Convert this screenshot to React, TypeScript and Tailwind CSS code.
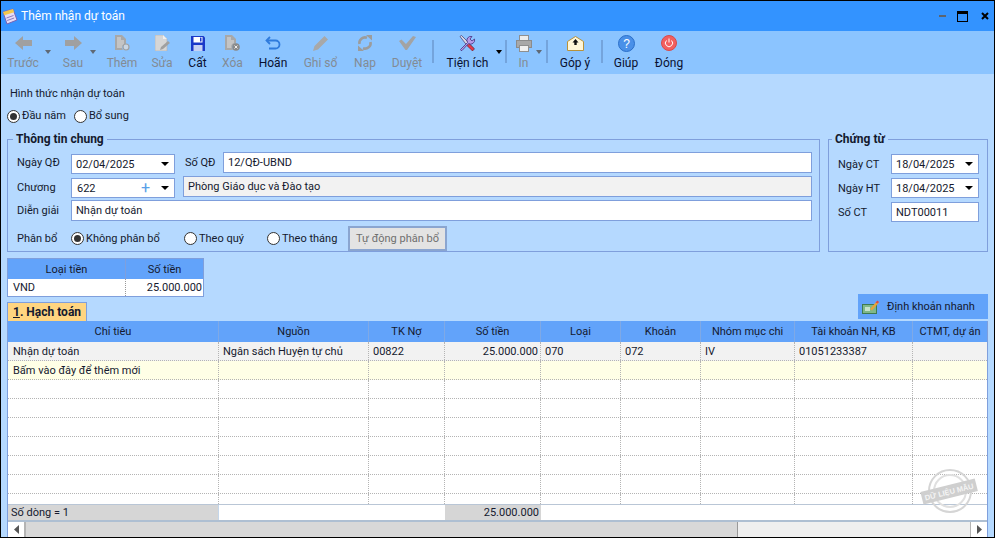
import React from "react";

function Caret({ c = "#000", small }: { c?: string; small?: boolean }) {
  return small ? (
    <svg width="6" height="4" viewBox="0 0 6 4" className="shrink-0">
      <path d="M0 0h6L3 4z" fill={c} />
    </svg>
  ) : (
    <svg width="8" height="4" viewBox="0 0 8 4" className="shrink-0">
      <path d="M0 0h8L4 4z" fill={c} />
    </svg>
  );
}

const G = "#a0a0a0";

const icons: Record<string, React.ReactNode> = {
  back: (
    <svg width="17" height="14" viewBox="0 0 17 14"><path d="M8 0 0 7l8 7v-4h9V4H8z" fill={G} /></svg>
  ),
  next: (
    <svg width="17" height="14" viewBox="0 0 17 14"><path d="M9 0l8 7-8 7v-4H0V4h9z" fill={G} /></svg>
  ),
  add: (
    <svg width="15" height="16" viewBox="0 0 15 16"><path d="M0 0h7l4 4v5a3.500 3.500 0 0 0-3 6H0z" fill="#a8a8a8" /><path d="M2 2h4v3h3v4a4 4 0 0 0-2 4H2z" fill="#c4c4c4" /><circle cx="11" cy="12" r="3" fill="#c9d6e4" stroke="#a0a0a0" strokeWidth="1.200" /></svg>
  ),
  edit: (
    <svg width="15" height="16" viewBox="0 0 15 16"><path d="M0 0h8l4 4v12H0z" fill="#d6d6d6" stroke="#b0b0b0" strokeWidth=".6" /><path d="M8 0v4h4z" fill="#f0f0f0" /><path d="M5 15l1-3 7-6 2 2-7 6z" fill="#a0a0a0" /></svg>
  ),
  save: (
    <svg width="14" height="15" viewBox="0 0 14 15"><path d="M0 0h12.500L14 1.500V15H0z" fill="#1a39c8" /><rect x="2.500" y="1" width="9" height="5.500" fill="#fff" /><rect x="2.500" y="9" width="9" height="6" fill="#c7d2f2" /><rect x="9" y="1.500" width="1.500" height="4" fill="#1a39c8" /></svg>
  ),
  del: (
    <svg width="15" height="16" viewBox="0 0 15 16"><path d="M0 0h7l4 4v4.500a4 4 0 0 0-3 6.500H0z" fill="#a8a8a8" /><path d="M2 2h4v3h3v3a4 4 0 0 0-2.500 5H2z" fill="#c4c4c4" /><circle cx="11" cy="12" r="3.800" fill="#8a8a8a" /><path d="M9.500 10.500l3 3m0-3l-3 3" stroke="#eee" /></svg>
  ),
  undo: (
    <svg width="16" height="15" viewBox="0 0 16 15" fill="none"><path d="M5 1 1.500 4.500 5 8" stroke="#2f7bdc" strokeWidth="1.800" /><path d="M2 4.500h8.500a3.800 3.800 0 0 1 0 8H4" stroke="#2f7bdc" strokeWidth="1.800" /></svg>
  ),
  pen: (
    <svg width="16" height="16" viewBox="0 0 16 16"><path d="M0 16l1.500-5L11.500 1l3.500 3.500L5 14.500z" fill="#a8a8a8" /></svg>
  ),
  reload: (
    <svg width="16" height="16" viewBox="0 0 16 16" fill="none"><path d="M2.500 9A5.500 5.500 0 0 1 10 2.800M13.500 7A5.500 5.500 0 0 1 6 13.200" stroke="#9c9c9c" strokeWidth="2.600" /><path d="M9 0h6v5.500zM7 16H1v-5.500z" fill="#9c9c9c" /></svg>
  ),
  check: (
    <svg width="17" height="14" viewBox="0 0 17 14"><path d="M0 5l2.500-1.500L7 8l7-8 3 1-9 13H6.500z" fill="#a3a3a3" /></svg>
  ),
  tools: (
    <svg width="17" height="17" viewBox="0 0 17 17">
      <path d="M1 1.500 2.500.5l8 8 5 5.500-1.500 1.500-6-5z" fill="#d9d9e6" stroke="#3d3470" strokeWidth=".7" />
      <path d="M10 9l5 4.500-1.500 2.500-5-5z" fill="#e8384a" stroke="#7a1f2a" strokeWidth=".6" />
      <path d="M1.500 14.500 8.500 7.500A4 4 0 0 1 13 1.500l-2 2.500 2 2 2.500-2a4 4 0 0 1-6 4.500L3 15.500a1.200 1.200 0 0 1-1.500-1z" fill="#b59be8" stroke="#46307f" strokeWidth=".8" />
    </svg>
  ),
  print: (
    <svg width="16" height="17" viewBox="0 0 16 17"><rect x="3.500" y=".5" width="9" height="5" fill="#ececec" stroke="#8f8f8f" /><rect x=".5" y="5.500" width="15" height="7" fill="#a8a8a8" stroke="#8b8b8b" /><rect x="3.500" y="10.500" width="9" height="6" fill="#f0f0f0" stroke="#8f8f8f" /></svg>
  ),
  mail: (
    <svg width="17" height="15" viewBox="0 0 17 15"><path d="M.5 5.500 8.500.5l8 5v9H.500z" fill="#fff6d8" stroke="#b8923a" /><path d="M8.500 3l3 3.500H9.700V9H7.300V6.500H5.500z" fill="#111" /></svg>
  ),
  help: (
    <svg width="17" height="17" viewBox="0 0 17 17"><circle cx="8.500" cy="8.500" r="8" fill="#4a90e8" stroke="#2b6fc9" /><text x="8.500" y="13" textAnchor="middle" fontSize="12" fill="#fff" fontFamily="'Liberation Sans', sans-serif">?</text></svg>
  ),
  power: (
    <svg width="16" height="16" viewBox="0 0 16 16" fill="none"><circle cx="8" cy="8" r="7.500" fill="#f25f5f" stroke="#d84a4a" /><path d="M5.500 5.500a3.600 3.600 0 1 0 5 0" stroke="#fff" /><path d="M8 3.500v4" stroke="#fff" /></svg>
  ),
};

type Item = { w: string; label: string; icon: string; off?: boolean; caret?: string; caretC?: string; cls?: string };

function ToolItem({ w, label, icon, off, caret, caretC, cls }: Item) {
  return (
    <div className={`relative flex flex-col items-center shrink-0 ${w} ${cls ?? ""}`}>
      <div className="h-[22px] mt-[1px] flex items-center justify-center">{icons[icon]}</div>
      <div className={`mt-[1px] text-[12px] leading-[16px] whitespace-nowrap ${off ? "text-[#838b94]" : "text-[#0a1030]"}`}>{label}</div>
      {caret && (
        <div className={`absolute top-[19px] ${caret}`}>
          <Caret c={caretC} small />
        </div>
      )}
    </div>
  );
}

function Sep() {
  return <div className="w-[2px] h-[23px] self-start mt-[9px] bg-[#74a4dc] shrink-0" />;
}

function Radio({ on }: { on?: boolean }) {
  return (
    <span className="w-[13px] h-[13px] rounded-full border border-[#333] bg-white flex items-center justify-center shrink-0">
      {on && <span className="w-[7px] h-[7px] rounded-full bg-[#333]" />}
    </span>
  );
}

function RadioLabel({ on, children, cls }: { on?: boolean; children: React.ReactNode; cls?: string }) {
  return (
    <div className={`flex items-center gap-[2px] whitespace-nowrap shrink-0 ${cls ?? ""}`}>
      <Radio on={on} />
      <span>{children}</span>
    </div>
  );
}

function Field({ w, h = "h-[20px]", text, caret, plus, gray, cls }: { w: string; h?: string; text: string; caret?: boolean; plus?: boolean; gray?: boolean; cls?: string }) {
  return (
    <div className={`${w} ${h} ${cls ?? ""} border border-[#7f9fdc] ${gray ? "bg-[#f2f2f2]" : "bg-white"} flex items-center pl-[4px] shrink-0 whitespace-nowrap`}>
      <span className="flex-1">{text}</span>
      {plus && <span className="text-[#5aa0e8] text-[16px] leading-none mr-[11px]">+</span>}
      {caret && <span className="mr-[5px]"><Caret /></span>}
    </div>
  );
}

const cols = [
  { w: "w-[211px]", t: "Chỉ tiêu" },
  { w: "w-[150px]", t: "Nguồn" },
  { w: "w-[76px]", t: "TK Nợ" },
  { w: "w-[96px]", t: "Số tiền" },
  { w: "w-[80px]", t: "Loại" },
  { w: "w-[80px]", t: "Khoản" },
  { w: "w-[94px]", t: "Nhóm mục chi" },
  { w: "w-[118px]", t: "Tài khoản NH, KB" },
  { w: "flex-1", t: "CTMT, dự án" },
];

const data = ["Nhận dự toán", "Ngân sách Huyện tự chủ", "00822", "25.000.000", "070", "072", "IV", "01051233387", ""];

function Row({ bg, vals, h = "h-[19px]" }: { bg: string; vals?: string[]; h?: string }) {
  return (
    <div className={`flex shrink-0 ${h} ${bg} border-b border-dotted border-[#b4b4b4]`}>
      {cols.map((c, i) => (
        <div
          key={i}
          className={`${c.w} shrink-0 border-r border-dotted border-[#b4b4b4] last:border-r-0 flex items-center px-[4px] whitespace-nowrap ${i === 3 ? "justify-end pr-[2px]" : ""} ${i === 0 ? "pl-[5px]" : ""}`}
        >
          {vals?.[i]}
        </div>
      ))}
    </div>
  );
}

export default function App() {
  return (
    <div className="w-[995px] h-[538px] overflow-hidden bg-black p-[1px] font-['Roboto','Noto_Sans',sans-serif] text-[11px] text-[#14192e] leading-none">
      <div className="w-full h-full flex flex-col bg-[#b5d9ff] relative">
        {/* Title bar */}
        <div className="h-[30px] bg-[#3393ff] flex items-center shrink-0">
          <svg width="16" height="17" viewBox="0 0 16 17" className="ml-[1px] mt-[1px]">
            <path d="M1 4l10-3 4 11-10 4z" fill="#e6dcf6" stroke="#7563b5" />
            <path d="M1 4l10-3 1.200 3.200-10 3z" fill="#f3c94d" />
            <path d="M4.500 10l7-2.500M5.200 12.500l7-2.500" stroke="#8a7ac0" />
          </svg>
          <span className="ml-[3px] text-white text-[12px]">Thêm nhận dự toán</span>
          <div className="flex-1" />
          <div className="w-[7px] h-[2px] bg-[#5b6470] mr-[11px]" />
          <div className="w-[11px] h-[11px] border border-black border-t-[3px] mr-[13px]" />
          <svg width="8" height="8" viewBox="0 0 8 8" className="mr-[5px]"><path d="M1 1l6 6M7 1 1 7" stroke="#000" strokeWidth="2" /></svg>
        </div>

        {/* Toolbar */}
        <div className="h-[43px] bg-[#8bc4ff] flex shrink-0">
          <ToolItem w="w-[44px]" label="Trước" icon="back" off caret="left-[44px]" caretC="#5f6975" />
          <ToolItem w="w-[56px]" label="Sau" icon="next" off caret="left-[45px]" caretC="#5f6975" />
          <ToolItem w="w-[42px]" label="Thêm" icon="add" off />
          <ToolItem w="w-[38px]" label="Sửa" icon="edit" off />
          <ToolItem w="w-[33px]" label="Cất" icon="save" />
          <ToolItem w="w-[37px]" label="Xóa" icon="del" off />
          <ToolItem w="w-[44px]" label="Hoãn" icon="undo" />
          <ToolItem w="w-[51px]" label="Ghi sổ" icon="pen" off />
          <ToolItem w="w-[38px]" label="Nạp" icon="reload" off />
          <ToolItem w="w-[46px]" label="Duyệt" icon="check" off />
          <div className="w-[2px]" />
          <Sep />
          <ToolItem w="w-[67px]" label="Tiện ích" icon="tools" caret="left-[62px]" />
          <div className="w-[4px]" />
          <Sep />
          <ToolItem w="w-[33px]" label="In" icon="print" off caret="left-[29px]" caretC="#5f6975" />
          <div className="w-[6px]" />
          <Sep />
          <ToolItem w="w-[53px]" label="Góp ý" icon="mail" cls="pl-[1px]" />
          <Sep />
          <ToolItem w="w-[46px]" label="Giúp" icon="help" />
          <ToolItem w="w-[40px]" label="Đóng" icon="power" />
        </div>

        {/* Body */}
        <div className="flex-1 flex flex-col px-[6px] min-h-0">
          <div className="mt-[13px] ml-[3px] leading-[14px]">Hình thức nhận dự toán</div>
          <div className="flex mt-[8px] leading-[14px]">
            <RadioLabel on cls="w-[67px]">Đầu năm</RadioLabel>
            <RadioLabel>Bổ sung</RadioLabel>
          </div>

          {/* Groups */}
          <div className="flex mt-[16px] gap-[8px] h-[113px] shrink-0">
            <div className="relative w-[813px] border border-[#7f9fdc] shrink-0 pl-[9px] pt-[12px]">
              <div className="absolute -top-[8px] left-[5px] px-[3px] bg-[#b5d9ff] font-bold text-[12px] leading-[14px]">Thông tin chung</div>
              <div className="flex items-start h-[21px]">
                <div className="w-[54px] shrink-0 mt-[5px]">Ngày QĐ</div>
                <Field w="w-[104px]" text="02/04/2025" caret cls="mt-[2px]" />
                <div className="ml-[10px] w-[38px] shrink-0 mt-[5px]">Số QĐ</div>
                <Field w="w-[589px]" h="h-[21px]" text="12/QĐ-UBND" />
              </div>
              <div className="flex items-start h-[21px] mt-[3px]">
                <div className="w-[54px] shrink-0 mt-[6px]">Chương</div>
                <Field w="w-[104px]" text="622" caret plus cls="pl-[5px] mt-[2px]" />
                <Field w="w-[629px]" h="h-[21px]" text="Phòng Giáo dục và Đào tạo" gray cls="ml-[8px]" />
              </div>
              <div className="flex items-center h-[21px] mt-[3px]">
                <div className="w-[54px] shrink-0">Diễn giải</div>
                <Field w="w-[741px]" h="h-[21px]" text="Nhận dự toán" />
              </div>
              <div className="flex items-center mt-[5px] h-[25px]">
                <div className="w-[54px] shrink-0">Phân bổ</div>
                <RadioLabel on cls="w-[113px]">Không phân bổ</RadioLabel>
                <RadioLabel cls="w-[83px]">Theo quý</RadioLabel>
                <RadioLabel cls="w-[81px]">Theo tháng</RadioLabel>
                <div className="w-[99px] h-[25px] border-2 border-[#8aa5d0] bg-[#e3e3e3] text-[#6f6f6f] flex items-center justify-center whitespace-nowrap">Tự động phân bổ</div>
              </div>
            </div>
            <div className="relative w-[160px] border border-[#7f9fdc] shrink-0 pl-[9px] pt-[14px]">
              <div className="absolute -top-[8px] left-[3px] px-[3px] bg-[#b5d9ff] font-bold text-[12px] leading-[14px]">Chứng từ</div>
              <div className="flex items-center">
                <div className="w-[53px] shrink-0">Ngày CT</div>
                <Field w="w-[88px]" text="18/04/2025" caret />
              </div>
              <div className="flex items-center mt-[4px]">
                <div className="w-[53px] shrink-0">Ngày HT</div>
                <Field w="w-[88px]" text="18/04/2025" caret />
              </div>
              <div className="flex items-center mt-[4px]">
                <div className="w-[53px] shrink-0">Số CT</div>
                <Field w="w-[88px]" text="NDT00011" />
              </div>
            </div>
          </div>

          {/* Currency table */}
          <div className="mt-[6px] w-[197px] border border-[#7f9fdc] shrink-0">
            <div className="flex h-[20px] bg-[#62a3fa]">
              <div className="w-[118px] border-r border-[#7f9fdc] flex items-center justify-center">Loại tiền</div>
              <div className="flex-1 flex items-center justify-center">Số tiền</div>
            </div>
            <div className="flex h-[17px] bg-white">
              <div className="w-[118px] border-r border-dotted border-[#999] flex items-center pl-[5px]">VND</div>
              <div className="flex-1 flex items-center justify-end pr-[1px]">25.000.000</div>
            </div>
          </div>

          {/* Tab row */}
          <div className="flex items-end justify-between -mt-[3px] h-[28px] shrink-0">
            <div className="w-[80px] h-[19px] mb-[1px] bg-[#ffd580] border border-[#7f9fdc] border-b-0 font-bold text-[12px] flex items-center pl-[5px] whitespace-nowrap">
              <span className="underline">1</span>. Hạch toán
            </div>
            <div className="w-[130px] h-[25px] mb-[3px] bg-[#62a3fa] flex items-center pl-[4px] whitespace-nowrap">
              <svg width="17" height="14" viewBox="0 0 17 14">
                <rect x="0.500" y="4.500" width="14" height="9" fill="#7fb88a" stroke="#3f7a50" />
                <rect x="3" y="7" width="5" height="4" fill="#c7e3cc" />
                <path d="M8 9l7-8 2 1.500-7 8z" fill="#e8a33a" />
                <path d="M13.500 2.500l2-2 1.500 1.500-1.500 1.500z" fill="#d84a4a" />
              </svg>
              <span className="ml-[8px]">Định khoản nhanh</span>
            </div>
          </div>

          {/* Grid */}
          <div className="relative border-x border-[#7f9fdc] bg-white flex flex-col flex-1 min-h-0 -mt-[1px]">
            <div className="flex h-[21px] bg-[#62a3fa] shrink-0">
              {cols.map((c, i) => (
                <div key={i} className={`${c.w} shrink-0 flex items-center justify-center border-r border-[#7fa9e6] last:border-r-0 whitespace-nowrap`}>{c.t}</div>
              ))}
            </div>
            <Row bg="bg-[#f2f2f2]" vals={data} />
            <Row bg="bg-[#ffffe6]" vals={["Bấm vào đây để thêm mới"]} />
            <Row bg="bg-white" />
            <Row bg="bg-white" />
            <Row bg="bg-white" />
            <Row bg="bg-white" />
            <Row bg="bg-white" />
            <Row bg="bg-white" />
            <div className="flex flex-1 min-h-0">
              {cols.map((c, i) => (
                <div key={i} className={`${c.w} shrink-0 border-r border-dotted border-[#b4b4b4] last:border-r-0`} />
              ))}
            </div>
            {/* Footer */}
            <div className="flex h-[16px] border-t border-[#b9c6d6] shrink-0">
              <div className="w-[211px] bg-[#d6d6d6] flex items-center pl-[3px] border-r border-[#c4d6ea]">Số dòng = 1</div>
              <div className="w-[226px] bg-white" />
              <div className="w-[96px] bg-[#d6d6d6] flex items-center justify-end pr-[2px]">25.000.000</div>
              <div className="flex-1 bg-white" />
            </div>
            {/* Scrollbar */}
            <div className="flex h-[17px] border-t-2 border-[#aebfd2] bg-[#efefef] shrink-0">
              <div className="w-[18px] bg-white border-r-[2px] border-[#b4b4b4] flex items-center justify-center">
                <svg width="5" height="9" viewBox="0 0 5 9"><path d="M5 0v9L0 4.500z" fill="#555" /></svg>
              </div>
              <div className="w-[712px] bg-[#d8d8d8] border-r border-[#999]" />
              <div className="flex-1" />
              <div className="w-[17px] bg-white border-l border-[#b4b4b4] flex items-center justify-center">
                <svg width="5" height="9" viewBox="0 0 5 9"><path d="M0 0v9l5-4.500z" fill="#555" /></svg>
              </div>
            </div>
            {/* Watermark */}
            <svg width="58" height="46" viewBox="0 0 58 46" className="absolute right-[9px] bottom-[23px] pointer-events-none">
              <circle cx="30" cy="23" r="21" fill="none" stroke="#d5d5d5" strokeWidth="2" />
              <circle cx="30" cy="23" r="16" fill="none" stroke="#e0e0e0" strokeWidth="2" />
              <g transform="rotate(-14 29 23)">
                <rect x="1" y="17" width="56" height="13" fill="#cfcfcf" />
                <text x="29" y="26.500" textAnchor="middle" fontSize="7.500" fontWeight="700" fill="#f4f4f4" fontFamily="'Liberation Sans', sans-serif">DỮ LIỆU MẪU</text>
              </g>
            </svg>
          </div>
        </div>
      </div>
    </div>
  );
}
